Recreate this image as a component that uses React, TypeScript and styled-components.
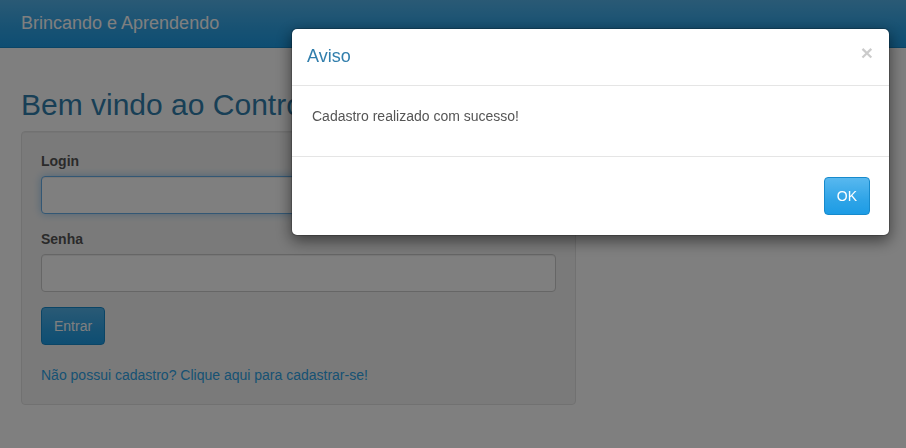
import React from "react";
import styled, { createGlobalStyle } from "styled-components";

// NOTE: Cerulean-like bootstrap look, modal open over the login page

const GlobalStyle = createGlobalStyle`
  html, body {
    margin: 0;
    padding: 0;
    background-color: #ffffff;
    font-family: "Liberation Sans", Arial, Helvetica, sans-serif;
    font-size: 14px;
    line-height: 20px;
    color: #555555;
  }
  * {
    box-sizing: border-box;
  }
`;

const Navbar = styled.header`
  height: 48px;
  background-image: linear-gradient(#54b4eb, #2fa4e7 60%, #1d9ce5);
  border-bottom: 1px solid #178acc;
  display: flex;
  align-items: center;
  padding: 0 21px 1px;
`;

const Brand = styled.a`
  color: #ffffff;
  font-size: 18px;
  line-height: 20px;
  text-decoration: none;
`;

const Page = styled.main`
  padding: 40px 0 0 21px;
`;

const Title = styled.h1`
  margin: 0 0 10px;
  font-size: 30px;
  line-height: 33px;
  font-weight: 500;
  color: #317eac;
  white-space: nowrap;
`;

const Well = styled.div`
  width: 555px;
  background-color: #f5f5f5;
  border: 1px solid #e3e3e3;
  border-radius: 4px;
  box-shadow: inset 0 1px 1px rgba(0, 0, 0, 0.05);
  padding: 19px;
`;

const FormGroup = styled.div`
  display: flex;
  flex-direction: column;
  margin-bottom: 15px;
`;

const Label = styled.label`
  font-weight: 700;
  margin-bottom: 5px;
  color: #555555;
`;

const Input = styled.input<{ $focused?: boolean }>`
  height: 38px;
  padding: 8px 12px;
  font: inherit;
  color: #555555;
  background-color: #ffffff;
  border: 1px solid ${(p) => (p.$focused ? "#66afe9" : "#cccccc")};
  border-radius: 4px;
  box-shadow: inset 0 1px 1px rgba(0, 0, 0, 0.075)
    ${(p) => (p.$focused ? ", 0 0 8px rgba(102, 175, 233, 0.6)" : "")};
  outline: none;
`;

const PrimaryButton = styled.button<{ $light?: boolean }>`
  height: 38px;
  padding: 8px 12px;
  font: inherit;
  font-size: 14px;
  line-height: 20px;
  color: #ffffff;
  background-image: ${(p) =>
    p.$light
      ? "linear-gradient(#58b8ef, #2fa4e7 60%, #1d9ce5)"
      : "linear-gradient(#54b4eb, #2fa4e7 60%, #1d9ce5)"};
  border: 1px solid #178acc;
  border-radius: 4px;
  cursor: pointer;
`;

const SignupLink = styled.a`
  display: block;
  margin-top: 20px;
  color: #2fa4e7;
  text-decoration: none;
`;

const Backdrop = styled.div`
  position: fixed;
  inset: 0;
  background-color: rgba(0, 0, 0, 0.5);
`;

const ModalPanel = styled.div`
  position: fixed;
  top: 28px;
  left: 291px;
  width: 599px;
  background-color: #ffffff;
  border: 1px solid rgba(0, 0, 0, 0.2);
  border-radius: 6px;
  box-shadow: 0 5px 15px rgba(0, 0, 0, 0.5);
  background-clip: padding-box;
`;

const ModalHeader = styled.div`
  display: flex;
  align-items: center;
  justify-content: space-between;
  height: 57px;
  padding: 0 16px 1px 15px;
  border-bottom: 1px solid #e5e5e5;
`;

const ModalTitle = styled.h4`
  margin: 0;
  font-size: 18px;
  line-height: 25px;
  font-weight: 500;
  color: #317eac;
`;

const CloseBtn = styled.button`
  padding: 0;
  border: none;
  background: transparent;
  font: inherit;
  font-size: 21px;
  font-weight: 700;
  line-height: 1;
  color: #000000;
  opacity: 0.2;
  margin-top: -8px;
  cursor: pointer;
`;

const ModalBody = styled.div`
  padding: 20px;
  border-bottom: 1px solid #e5e5e5;

  p {
    margin: 0 0 10px;
  }
`;

const ModalFooter = styled.div`
  display: flex;
  justify-content: flex-end;
  padding: 20px 19px;
`;

export default function App() {
  return (
    <>
      <GlobalStyle />
      <Navbar>
        <Brand href="#">Brincando e Aprendendo</Brand>
      </Navbar>
      <Page>
        <Title>Bem vindo ao Controle de Atividades</Title>
        <Well>
          <FormGroup>
            <Label htmlFor="login">Login</Label>
            <Input id="login" type="text" $focused />
          </FormGroup>
          <FormGroup>
            <Label htmlFor="senha">Senha</Label>
            <Input id="senha" type="password" />
          </FormGroup>
          <div>
            <PrimaryButton type="button">Entrar</PrimaryButton>
          </div>
          <SignupLink href="#">
            Não possui cadastro? Clique aqui para cadastrar-se!
          </SignupLink>
        </Well>
      </Page>

      <Backdrop />
      <ModalPanel role="dialog">
        <ModalHeader>
          <ModalTitle>Aviso</ModalTitle>
          <CloseBtn type="button" aria-label="Fechar">
            ×
          </CloseBtn>
        </ModalHeader>
        <ModalBody>
          <p>Cadastro realizado com sucesso!</p>
        </ModalBody>
        <ModalFooter>
          <PrimaryButton type="button" $light>
            OK
          </PrimaryButton>
        </ModalFooter>
      </ModalPanel>
    </>
  );
}
